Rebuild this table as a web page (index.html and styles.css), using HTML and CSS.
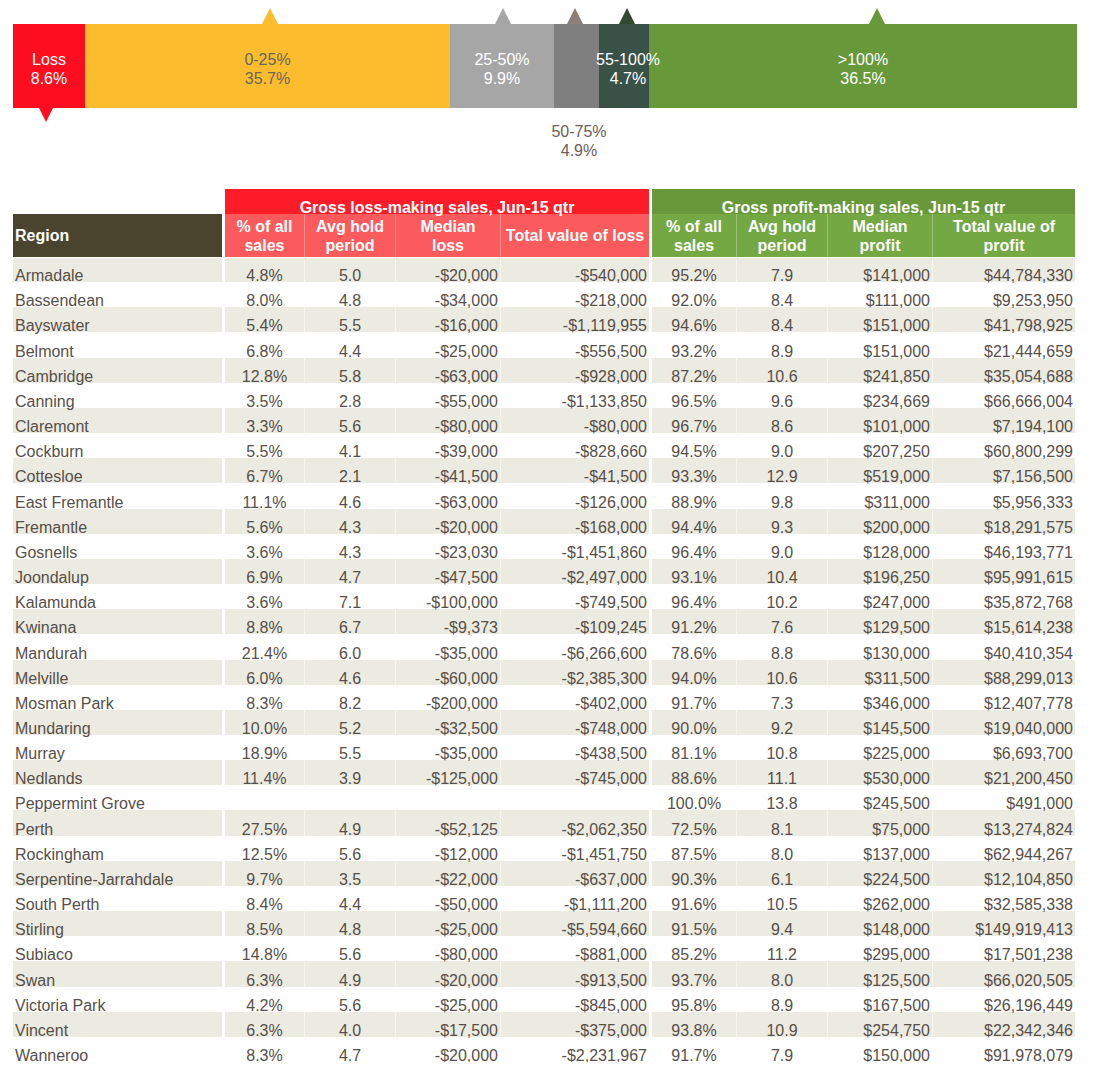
FILE: index.html
```html
<!DOCTYPE html>
<html lang="en">
<head>
<meta charset="utf-8">
<title>Gross loss and profit making sales, Jun-15 qtr</title>
<link rel="stylesheet" href="styles.css">
</head>
<body>
<div class="page">
  <div class="dist">
    <div class="bar">
      <div class="seg seg-loss" style="width:72px"><span>Loss<br>8.6%</span></div>
      <div class="seg seg-q1" style="width:365px"><span>0-25%<br>35.7%</span></div>
      <div class="seg seg-q2" style="width:104px"><span>25-50%<br>9.9%</span></div>
      <div class="seg seg-q3" style="width:45px"></div>
      <div class="seg seg-q4" style="width:50px"><span>55-100%<br>4.7%</span></div>
      <div class="seg seg-q5" style="width:428px"><span>&gt;100%<br>36.5%</span></div>
    </div>
    <i class="tri-down tri-loss"></i>
    <i class="tri-up tri-q1"></i>
    <i class="tri-up tri-q2"></i>
    <i class="tri-up tri-q3"></i>
    <i class="tri-up tri-q4"></i>
    <i class="tri-up tri-q5"></i>
    <div class="below-label">50-75%<br>4.9%</div>
  </div>

  <table class="sales">
    <colgroup>
      <col class="c-region">
      <col class="c-pct-l">
      <col class="c-hold">
      <col class="c-med">
      <col class="c-tot-l">
      <col class="c-pct-p">
      <col class="c-hold">
      <col class="c-med">
      <col class="c-tot-p">
    </colgroup>
    <thead>
      <tr class="group-row">
        <th class="blank"></th>
        <th class="grp grp-loss gs" colspan="4">Gross loss-making sales, Jun-15 qtr</th>
        <th class="grp grp-profit gs" colspan="4">Gross profit-making sales, Jun-15 qtr</th>
      </tr>
      <tr class="sub-row">
        <th class="region-h">Region</th>
        <th class="sub sub-loss gs">% of all<br>sales</th>
        <th class="sub sub-loss">Avg hold<br>period</th>
        <th class="sub sub-loss">Median<br>loss</th>
        <th class="sub sub-loss last">Total value of loss</th>
        <th class="sub sub-profit gs">% of all<br>sales</th>
        <th class="sub sub-profit">Avg hold<br>period</th>
        <th class="sub sub-profit">Median<br>profit</th>
        <th class="sub sub-profit last">Total value of<br>profit</th>
      </tr>
    </thead>
    <tbody>
      <tr><td class="reg">Armadale</td><td class="ctr gs">4.8%</td><td class="ctr">5.0</td><td class="num">-$20,000</td><td class="num last">-$540,000</td><td class="ctr gs">95.2%</td><td class="ctr">7.9</td><td class="num">$141,000</td><td class="num last">$44,784,330</td></tr>
      <tr><td class="reg">Bassendean</td><td class="ctr gs">8.0%</td><td class="ctr">4.8</td><td class="num">-$34,000</td><td class="num last">-$218,000</td><td class="ctr gs">92.0%</td><td class="ctr">8.4</td><td class="num">$111,000</td><td class="num last">$9,253,950</td></tr>
      <tr><td class="reg">Bayswater</td><td class="ctr gs">5.4%</td><td class="ctr">5.5</td><td class="num">-$16,000</td><td class="num last">-$1,119,955</td><td class="ctr gs">94.6%</td><td class="ctr">8.4</td><td class="num">$151,000</td><td class="num last">$41,798,925</td></tr>
      <tr><td class="reg">Belmont</td><td class="ctr gs">6.8%</td><td class="ctr">4.4</td><td class="num">-$25,000</td><td class="num last">-$556,500</td><td class="ctr gs">93.2%</td><td class="ctr">8.9</td><td class="num">$151,000</td><td class="num last">$21,444,659</td></tr>
      <tr><td class="reg">Cambridge</td><td class="ctr gs">12.8%</td><td class="ctr">5.8</td><td class="num">-$63,000</td><td class="num last">-$928,000</td><td class="ctr gs">87.2%</td><td class="ctr">10.6</td><td class="num">$241,850</td><td class="num last">$35,054,688</td></tr>
      <tr><td class="reg">Canning</td><td class="ctr gs">3.5%</td><td class="ctr">2.8</td><td class="num">-$55,000</td><td class="num last">-$1,133,850</td><td class="ctr gs">96.5%</td><td class="ctr">9.6</td><td class="num">$234,669</td><td class="num last">$66,666,004</td></tr>
      <tr><td class="reg">Claremont</td><td class="ctr gs">3.3%</td><td class="ctr">5.6</td><td class="num">-$80,000</td><td class="num last">-$80,000</td><td class="ctr gs">96.7%</td><td class="ctr">8.6</td><td class="num">$101,000</td><td class="num last">$7,194,100</td></tr>
      <tr><td class="reg">Cockburn</td><td class="ctr gs">5.5%</td><td class="ctr">4.1</td><td class="num">-$39,000</td><td class="num last">-$828,660</td><td class="ctr gs">94.5%</td><td class="ctr">9.0</td><td class="num">$207,250</td><td class="num last">$60,800,299</td></tr>
      <tr><td class="reg">Cottesloe</td><td class="ctr gs">6.7%</td><td class="ctr">2.1</td><td class="num">-$41,500</td><td class="num last">-$41,500</td><td class="ctr gs">93.3%</td><td class="ctr">12.9</td><td class="num">$519,000</td><td class="num last">$7,156,500</td></tr>
      <tr><td class="reg">East Fremantle</td><td class="ctr gs">11.1%</td><td class="ctr">4.6</td><td class="num">-$63,000</td><td class="num last">-$126,000</td><td class="ctr gs">88.9%</td><td class="ctr">9.8</td><td class="num">$311,000</td><td class="num last">$5,956,333</td></tr>
      <tr><td class="reg">Fremantle</td><td class="ctr gs">5.6%</td><td class="ctr">4.3</td><td class="num">-$20,000</td><td class="num last">-$168,000</td><td class="ctr gs">94.4%</td><td class="ctr">9.3</td><td class="num">$200,000</td><td class="num last">$18,291,575</td></tr>
      <tr><td class="reg">Gosnells</td><td class="ctr gs">3.6%</td><td class="ctr">4.3</td><td class="num">-$23,030</td><td class="num last">-$1,451,860</td><td class="ctr gs">96.4%</td><td class="ctr">9.0</td><td class="num">$128,000</td><td class="num last">$46,193,771</td></tr>
      <tr><td class="reg">Joondalup</td><td class="ctr gs">6.9%</td><td class="ctr">4.7</td><td class="num">-$47,500</td><td class="num last">-$2,497,000</td><td class="ctr gs">93.1%</td><td class="ctr">10.4</td><td class="num">$196,250</td><td class="num last">$95,991,615</td></tr>
      <tr><td class="reg">Kalamunda</td><td class="ctr gs">3.6%</td><td class="ctr">7.1</td><td class="num">-$100,000</td><td class="num last">-$749,500</td><td class="ctr gs">96.4%</td><td class="ctr">10.2</td><td class="num">$247,000</td><td class="num last">$35,872,768</td></tr>
      <tr><td class="reg">Kwinana</td><td class="ctr gs">8.8%</td><td class="ctr">6.7</td><td class="num">-$9,373</td><td class="num last">-$109,245</td><td class="ctr gs">91.2%</td><td class="ctr">7.6</td><td class="num">$129,500</td><td class="num last">$15,614,238</td></tr>
      <tr><td class="reg">Mandurah</td><td class="ctr gs">21.4%</td><td class="ctr">6.0</td><td class="num">-$35,000</td><td class="num last">-$6,266,600</td><td class="ctr gs">78.6%</td><td class="ctr">8.8</td><td class="num">$130,000</td><td class="num last">$40,410,354</td></tr>
      <tr><td class="reg">Melville</td><td class="ctr gs">6.0%</td><td class="ctr">4.6</td><td class="num">-$60,000</td><td class="num last">-$2,385,300</td><td class="ctr gs">94.0%</td><td class="ctr">10.6</td><td class="num">$311,500</td><td class="num last">$88,299,013</td></tr>
      <tr><td class="reg">Mosman Park</td><td class="ctr gs">8.3%</td><td class="ctr">8.2</td><td class="num">-$200,000</td><td class="num last">-$402,000</td><td class="ctr gs">91.7%</td><td class="ctr">7.3</td><td class="num">$346,000</td><td class="num last">$12,407,778</td></tr>
      <tr><td class="reg">Mundaring</td><td class="ctr gs">10.0%</td><td class="ctr">5.2</td><td class="num">-$32,500</td><td class="num last">-$748,000</td><td class="ctr gs">90.0%</td><td class="ctr">9.2</td><td class="num">$145,500</td><td class="num last">$19,040,000</td></tr>
      <tr><td class="reg">Murray</td><td class="ctr gs">18.9%</td><td class="ctr">5.5</td><td class="num">-$35,000</td><td class="num last">-$438,500</td><td class="ctr gs">81.1%</td><td class="ctr">10.8</td><td class="num">$225,000</td><td class="num last">$6,693,700</td></tr>
      <tr><td class="reg">Nedlands</td><td class="ctr gs">11.4%</td><td class="ctr">3.9</td><td class="num">-$125,000</td><td class="num last">-$745,000</td><td class="ctr gs">88.6%</td><td class="ctr">11.1</td><td class="num">$530,000</td><td class="num last">$21,200,450</td></tr>
      <tr><td class="reg">Peppermint Grove</td><td class="ctr gs"></td><td class="ctr"></td><td class="num"></td><td class="num last"></td><td class="ctr gs">100.0%</td><td class="ctr">13.8</td><td class="num">$245,500</td><td class="num last">$491,000</td></tr>
      <tr><td class="reg">Perth</td><td class="ctr gs">27.5%</td><td class="ctr">4.9</td><td class="num">-$52,125</td><td class="num last">-$2,062,350</td><td class="ctr gs">72.5%</td><td class="ctr">8.1</td><td class="num">$75,000</td><td class="num last">$13,274,824</td></tr>
      <tr><td class="reg">Rockingham</td><td class="ctr gs">12.5%</td><td class="ctr">5.6</td><td class="num">-$12,000</td><td class="num last">-$1,451,750</td><td class="ctr gs">87.5%</td><td class="ctr">8.0</td><td class="num">$137,000</td><td class="num last">$62,944,267</td></tr>
      <tr><td class="reg">Serpentine-Jarrahdale</td><td class="ctr gs">9.7%</td><td class="ctr">3.5</td><td class="num">-$22,000</td><td class="num last">-$637,000</td><td class="ctr gs">90.3%</td><td class="ctr">6.1</td><td class="num">$224,500</td><td class="num last">$12,104,850</td></tr>
      <tr><td class="reg">South Perth</td><td class="ctr gs">8.4%</td><td class="ctr">4.4</td><td class="num">-$50,000</td><td class="num last">-$1,111,200</td><td class="ctr gs">91.6%</td><td class="ctr">10.5</td><td class="num">$262,000</td><td class="num last">$32,585,338</td></tr>
      <tr><td class="reg">Stirling</td><td class="ctr gs">8.5%</td><td class="ctr">4.8</td><td class="num">-$25,000</td><td class="num last">-$5,594,660</td><td class="ctr gs">91.5%</td><td class="ctr">9.4</td><td class="num">$148,000</td><td class="num last">$149,919,413</td></tr>
      <tr><td class="reg">Subiaco</td><td class="ctr gs">14.8%</td><td class="ctr">5.6</td><td class="num">-$80,000</td><td class="num last">-$881,000</td><td class="ctr gs">85.2%</td><td class="ctr">11.2</td><td class="num">$295,000</td><td class="num last">$17,501,238</td></tr>
      <tr><td class="reg">Swan</td><td class="ctr gs">6.3%</td><td class="ctr">4.9</td><td class="num">-$20,000</td><td class="num last">-$913,500</td><td class="ctr gs">93.7%</td><td class="ctr">8.0</td><td class="num">$125,500</td><td class="num last">$66,020,505</td></tr>
      <tr><td class="reg">Victoria Park</td><td class="ctr gs">4.2%</td><td class="ctr">5.6</td><td class="num">-$25,000</td><td class="num last">-$845,000</td><td class="ctr gs">95.8%</td><td class="ctr">8.9</td><td class="num">$167,500</td><td class="num last">$26,196,449</td></tr>
      <tr><td class="reg">Vincent</td><td class="ctr gs">6.3%</td><td class="ctr">4.0</td><td class="num">-$17,500</td><td class="num last">-$375,000</td><td class="ctr gs">93.8%</td><td class="ctr">10.9</td><td class="num">$254,750</td><td class="num last">$22,342,346</td></tr>
      <tr><td class="reg">Wanneroo</td><td class="ctr gs">8.3%</td><td class="ctr">4.7</td><td class="num">-$20,000</td><td class="num last">-$2,231,967</td><td class="ctr gs">91.7%</td><td class="ctr">7.9</td><td class="num">$150,000</td><td class="num last">$91,978,079</td></tr>
    </tbody>
  </table>
</div>
</body>
</html>
```

FILE: styles.css
```css
* { box-sizing: border-box; }

html, body {
  margin: 0;
  padding: 0;
  background: #ffffff;
}

body {
  font-family: "Liberation Sans", Arial, Helvetica, sans-serif;
  font-size: 16px;
  color: #574f49;
}

.page {
  padding: 24px 0 0 13px;
}

/* ---------- distribution bar ---------- */
.dist {
  position: relative;
  width: 1064px;
  height: 84px;
  margin-bottom: 81px;
}

.bar {
  display: flex;
  height: 84px;
}

.seg {
  flex: none;
  height: 100%;
  display: flex;
  align-items: center;
  justify-content: center;
  padding-top: 6px;
  line-height: 19.3px;
  text-align: center;
  color: #ffffff;
  white-space: nowrap;
  overflow: visible;
}

.seg span {
  display: block;
  position: relative;
  z-index: 1;
}

.seg-loss { background: #fc0e20; }
.seg-q1 { background: #fbbd2e; color: #6a665c; }
.seg-q2 { background: #a6a6a6; }
.seg-q3 { background: #7f7f7f; }
.seg-q4 { background: #3a5148; padding-left: 8px; }
.seg-q5 { background: #67993a; }

.tri-up,
.tri-down {
  position: absolute;
  width: 0;
  height: 0;
  border-left: 8px solid transparent;
  border-right: 8px solid transparent;
}

.tri-up {
  top: -16px;
  border-bottom: 16px solid;
}

.tri-down {
  top: 84px;
  border-left-width: 7px;
  border-right-width: 7px;
  border-top: 14px solid #fc0e20;
}

.tri-loss { left: 26px; }
.tri-q1 { left: 249px; border-bottom-color: #fbbd2e; }
.tri-q2 { left: 482px; border-bottom-color: #a6a6a6; }
.tri-q3 { left: 554px; border-bottom-color: #8a8075; }
.tri-q4 { left: 606px; border-bottom-color: #2f4a2e; }
.tri-q5 { left: 856px; border-bottom-color: #67993a; }

.below-label {
  position: absolute;
  top: 98px;
  left: 536px;
  width: 60px;
  text-align: center;
  line-height: 19px;
  color: #6b6058;
  white-space: nowrap;
}

/* ---------- table ---------- */
.sales {
  width: 1062px;
  table-layout: fixed;
  border-collapse: separate;
  border-spacing: 0;
}

.c-region { width: 209px; }
.c-pct-l { width: 83px; }
.c-hold { width: 91px; }
.c-med { width: 105px; }
.c-tot-l { width: 148px; }
.c-pct-p { width: 88px; }
.c-tot-p { width: 142px; }

.sales th {
  font-weight: bold;
  color: #ffffff;
  padding: 0 2px;
}

.group-row { height: 25px; }

.grp {
  vertical-align: bottom;
  line-height: 12px;
  text-align: center;
  white-space: nowrap;
}

.grp-loss { background: #fd1c28; }
.grp-profit { background: #67993a; }

.blank { background: transparent; }

.sub-row { height: 43px; }

.sub {
  vertical-align: middle;
  padding-top: 5px;
  line-height: 19px;
  text-align: center;
  white-space: nowrap;
  border-right: 1px solid rgba(255, 255, 255, 0.3);
}

.sub.last { border-right: 0; }

.sub-loss { background: #fc5b5d; }
.sub-profit { background: #73a843; }

.region-h {
  background: #4a442e;
  text-align: left;
  vertical-align: middle;
  padding-top: 5px;
  line-height: 19px;
}

.gs { border-left: 3px solid #ffffff; }

.sales tbody tr { height: 25.16px; }

.sales tbody tr:first-child td { border-top: 1px solid #ffffff; }

.sales td {
  vertical-align: bottom;
  padding: 0 2px;
  line-height: 12px;
  white-space: nowrap;
  border-right: 1px solid rgba(255, 255, 255, 0.55);
}

.sales td.reg,
.sales td.last { border-right: 0; }

.sales tbody tr:nth-child(odd) td { background: #ecebe1; }

.reg { text-align: left; }
.ctr { text-align: center; }
.num { text-align: right; }
```
